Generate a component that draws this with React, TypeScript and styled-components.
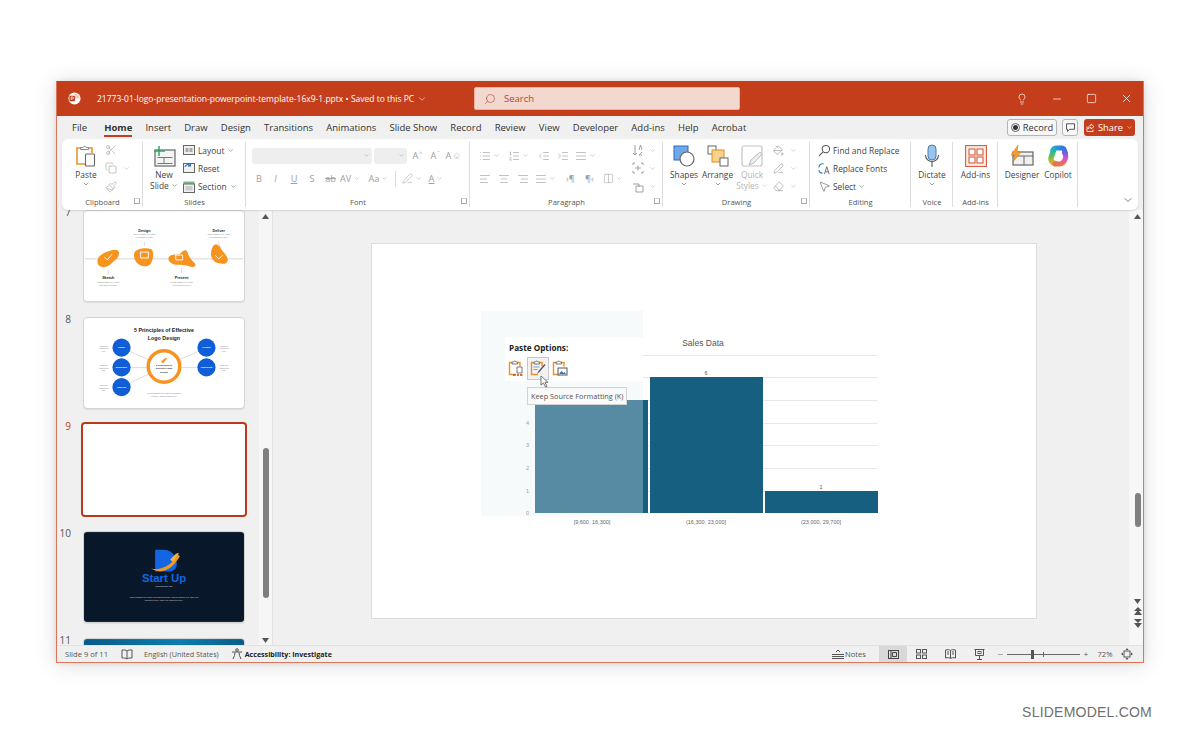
import React from 'react'
import styled, { createGlobalStyle } from 'styled-components'
import {
  AlignCenter, AlignJustify, AlignLeft, AlignRight, ChevronDown, Columns2, Copy, Eraser, IndentDecrease,
  IndentIncrease, Lightbulb, List, ListOrdered, Minus, MousePointer2, Paintbrush, PaintBucket, PenLine,
  Scissors, Search, Square, X
} from 'lucide-react'

const UI_FONT = `"Open Sans", "Noto Sans", sans-serif`

const GlobalStyle = createGlobalStyle`
  html, body { margin: 0; padding: 0; background: #fff; }
  body { font-family: ${UI_FONT}; color: #333; }
  * { box-sizing: border-box; }
`

const Page = styled.div`
  width: 1200px;
  height: 743px;
  padding: 81px 0 0 56px;
  overflow: hidden;
`

const Window = styled.div`
  width: 1088px;
  height: 582px;
  display: flex;
  flex-direction: column;
  background: #f0f0f0;
  border: 1px solid #d9775c;
  border-top: none;
  box-shadow: 0 0 6px rgba(0, 0, 0, 0.1), 0 2px 22px rgba(0, 0, 0, 0.13);
`

const TitleBar = styled.div`
  height: 35px;
  flex: none;
  display: flex;
  align-items: center;
  background: #c43e1c;
  color: #fff;
`

const TitleLeft = styled.div`
  width: 417px;
  display: flex;
  align-items: center;
  gap: 16px;
  padding-left: 11px;
  font-size: 8.5px;
  white-space: nowrap;
`

const TitleCaret = styled(ChevronDown)`
  margin-left: -13px;
`

const SearchBox = styled.div`
  width: 266px;
  height: 23px;
  display: flex;
  align-items: center;
  gap: 8px;
  padding-left: 9px;
  background: #f3d8d0;
  border: 1px solid #e8b3a3;
  border-radius: 2px;
  color: #b5472a;
  font-size: 9.5px;
`

const SearchGlyph = styled(Search)`
  transform: scaleX(-1);
`

const WindowControls = styled.div`
  flex: 1;
  display: flex;
  align-items: center;
  justify-content: flex-end;
  gap: 23px;
  padding-right: 10px;
`

const TabRow = styled.div`
  height: 23px;
  flex: none;
  display: flex;
  align-items: center;
  justify-content: space-between;
  padding: 0 8px 0 15px;
`

const Tabs = styled.div`
  display: flex;
  gap: 13.15px;
  font-size: 9.5px;
  color: #333;
`

const Tab = styled.div<{ $active?: boolean; $ml?: number }>`
  position: relative;
  height: 18px;
  line-height: 18px;
  margin-left: ${p => p.$ml ?? 0}px;
  white-space: nowrap;
  font-weight: ${p => (p.$active ? 700 : 400)};
  border-bottom: ${p => (p.$active ? '2px solid #c43e1c' : 'none')};
`

const TabActions = styled.div`
  display: flex;
  align-items: center;
  gap: 5px;
`

const OutlineButton = styled.div<{ $w: number }>`
  width: ${p => p.$w}px;
  height: 17px;
  display: flex;
  align-items: center;
  justify-content: center;
  gap: 3px;
  background: #f8f8f8;
  border: 1px solid #b5b5b5;
  border-radius: 3px;
  font-size: 9.3px;
  color: #333;
`

const ShareButton = styled.div`
  width: 51px;
  height: 17px;
  margin-left: 1px;
  display: flex;
  align-items: center;
  justify-content: center;
  gap: 3px;
  background: #c43e1c;
  border-radius: 3px;
  color: #fff;
  font-size: 9.3px;
`

const Ribbon = styled.div`
  height: 71px;
  flex: none;
  margin: 0 5px;
  display: flex;
  background: #fff;
  border-radius: 6px;
  box-shadow: 0 1px 2px rgba(0, 0, 0, 0.12);
  position: relative;
  z-index: 2;
`

const Group = styled.div<{ $w: number; $last?: boolean }>`
  width: ${p => p.$w}px;
  flex: none;
  display: flex;
  flex-direction: column;
  padding: 3px 0 3px;
  position: relative;
  &::after {
    content: '';
    position: absolute;
    right: 0;
    top: 3px;
    bottom: 3px;
    width: 1px;
    background: ${p => (p.$last ? 'transparent' : '#dedede')};
  }
`

const GroupBody = styled.div<{ $pad?: number; $disabled?: boolean }>`
  height: 54px;
  flex: none;
  display: flex;
  padding-left: ${p => p.$pad ?? 0}px;
  color: ${p => (p.$disabled ? '#a0a0a0' : '#555')};
`

const GroupFooter = styled.div`
  flex: 1;
  display: flex;
  align-items: center;
  justify-content: center;
  padding-top: 1px;
  font-size: 7.6px;
  color: #555;
  position: relative;
`

const Launcher = styled.div`
  position: absolute;
  right: 3px;
  top: 2px;
  width: 6px;
  height: 6px;
  border-left: 1px solid #a8a8a8;
  border-top: 1px solid #d0d0d0;
  border-bottom: 1px solid #a8a8a8;
  border-right: 1px solid #a8a8a8;
`

const LargeButton = styled.div<{ $w: number; $ml?: number; $disabled?: boolean }>`
  width: ${p => p.$w}px;
  margin-left: ${p => p.$ml ?? 0}px;
  flex: none;
  display: flex;
  flex-direction: column;
  align-items: center;
  font-size: 8.4px;
  line-height: 11px;
  white-space: nowrap;
  color: ${p => (p.$disabled ? '#b5b5b5' : '#444')};
`

const LargeIcon = styled.div`
  height: 27px;
  display: flex;
  align-items: center;
  justify-content: center;
`

const SmallCol = styled.div<{ $ml?: number }>`
  display: flex;
  flex-direction: column;
  margin: -1px 0 0 ${p => p.$ml ?? 0}px;
`

const SmallRow = styled.div<{ $disabled?: boolean; $gap?: number }>`
  height: 18.8px;
  display: flex;
  align-items: center;
  gap: ${p => p.$gap ?? 3}px;
  font-size: 8.4px;
  white-space: nowrap;
  color: ${p => (p.$disabled ? '#a0a0a0' : '#444')};
`

const ToolRows = styled.div`
  display: flex;
  flex-direction: column;
  gap: 6px;
  padding-top: 5px;
`

const ToolRow = styled.div`
  height: 17px;
  display: flex;
  align-items: center;
`

const Tool = styled.div<{ $w: number; $left?: boolean }>`
  width: ${p => p.$w}px;
  flex: none;
  display: flex;
  align-items: center;
  justify-content: ${p => (p.$left ? 'flex-start' : 'center')};
  gap: 2px;
  font-size: 9.2px;
  color: #a0a0a0;
`

const Mark = styled.span`
  font-size: 5.5px;
  margin: -5px 0 0 -1px;
`

const Combo = styled.div<{ $w: number }>`
  width: ${p => p.$w}px;
  height: 16px;
  flex: none;
  display: flex;
  align-items: center;
  justify-content: flex-end;
  padding-right: 2px;
  margin-right: 2px;
  background: #eeeeee;
  border-radius: 3px;
`

const RowDivider = styled.div`
  width: 1px;
  height: 16px;
  flex: none;
  background: #dedede;
  margin: 0 4px;
`

const CollapseSlot = styled.div`
  flex: 1;
  display: flex;
  align-items: flex-end;
  justify-content: flex-end;
  padding: 0 4px 4px 0;
  color: #444;
`

const Workspace = styled.div`
  flex: 1;
  min-height: 0;
  display: flex;
`

const ThumbPanel = styled.div`
  width: 202px;
  flex: none;
  overflow: hidden;
  display: flex;
  flex-direction: column;
  gap: 15px;
`

const ThumbRow = styled.div`
  display: flex;
  flex: none;
`

const ThumbNumber = styled.div<{ $active?: boolean }>`
  width: 26px;
  height: 12px;
  flex: none;
  margin-top: -4px;
  padding-right: 12px;
  text-align: right;
  font-size: 10px;
  line-height: 12px;
  color: ${p => (p.$active ? '#c43e1c' : '#555')};
`

const Thumb = styled.div<{ $active?: boolean }>`
  width: ${p => (p.$active ? 166 : 162)}px;
  height: ${p => (p.$active ? 95 : 92)}px;
  margin: ${p => (p.$active ? '-2px -2px -1px -2px' : '0')};
  background: #fff;
  border: ${p => (p.$active ? '2px solid #b93a1a' : '1px solid #d4d4d4')};
  border-radius: 4px;
  overflow: hidden;
  box-shadow: ${p => (p.$active ? 'none' : '0 1px 1px rgba(0,0,0,.08)')};
  svg { display: block; }
`

const PanelScroll = styled.div`
  width: 14px;
  flex: none;
  display: flex;
  flex-direction: column;
  align-items: center;
  background: #f6f6f6;
  border-right: 1px solid #e2e2e2;
  padding-top: 4px;
`

const PanelThumb = styled.div`
  width: 6px;
  height: 150px;
  margin-top: 229px;
  background: #7f7f7f;
  border-radius: 3px;
`

const ScrollArrow = styled.svg<{ $mt?: number }>`
  display: block;
  flex: none;
  margin-top: ${p => p.$mt ?? 0}px;
  fill: #555;
`

const Canvas = styled.div`
  flex: 1;
  padding: 34px 0 0 99px;
`

const Slide = styled.div`
  width: 664px;
  height: 374px;
  position: relative;
  background: #fff;
  box-shadow: 0 0 0 1px #dcdcdc;
  svg { display: block; }
`

const PasteVeil = styled.div`
  position: absolute;
  left: 109px;
  top: 67px;
  width: 162px;
  height: 205px;
  background: rgba(228, 238, 242, 0.31);
`

const PastePanel = styled.div`
  position: absolute;
  left: 133px;
  top: 93px;
  width: 138px;
  height: 44px;
  padding: 5px 0 0 4px;
  background: #fff;
`

const PasteTitle = styled.div`
  font-size: 8.2px;
  font-weight: 700;
  color: #222;
  line-height: 12px;
`

const PasteIcons = styled.div`
  display: flex;
  align-items: center;
  margin: 3px 0 0 -4px;
`

const PasteChoice = styled.div<{ $active?: boolean }>`
  width: 22px;
  height: 23px;
  display: flex;
  align-items: center;
  justify-content: center;
  background: ${p => (p.$active ? '#f2f2f2' : 'transparent')};
  border: 1px solid ${p => (p.$active ? '#c8c8c8' : 'transparent')};
`

const PasteTip = styled.div`
  position: absolute;
  left: 155px;
  top: 143px;
  width: 100px;
  height: 18px;
  padding-left: 3px;
  display: flex;
  align-items: center;
  background: #fafafa;
  border: 1px solid #d2d2d2;
  font-size: 7.3px;
  color: #555;
  white-space: nowrap;
`

const Pointer = styled.div`
  position: absolute;
  left: 168px;
  top: 131px;
  width: 10px;
  height: 13px;
  color: #555;
`

const CanvasScroll = styled.div`
  width: 14px;
  flex: none;
  display: flex;
  flex-direction: column;
  align-items: center;
  padding: 4px 0 0 3px;
  background: #f7f7f7;
`

const CanvasThumb = styled.div`
  width: 6px;
  height: 34px;
  margin-top: 274px;
  background: #7f7f7f;
  border-radius: 3px;
`

const StatusBar = styled.div`
  height: 17px;
  flex: none;
  display: flex;
  align-items: center;
  background: #f0f0f0;
  border-top: 1px solid #e2e2e2;
  padding-left: 8px;
  font-size: 7.6px;
  color: #555;
  white-space: nowrap;
`

const StatusLeft = styled.div`
  width: 767px;
  flex: none;
  display: flex;
  align-items: center;
`

const StatusGlyph = styled.svg<{ $ml: number; $mr: number }>`
  margin: 0 ${p => p.$mr}px 0 ${p => p.$ml}px;
`

const StatusLang = styled.span`
  font-size: 7.2px;
`

const StatusStrong = styled.span`
  font-size: 7.1px;
  font-weight: 700;
  color: #222;
  margin-left: 2px;
`

const StatusItem = styled.div<{ $w: number; $active?: boolean; $gap?: number }>`
  width: ${p => p.$w}px;
  height: 16px;
  flex: none;
  display: flex;
  align-items: center;
  justify-content: center;
  gap: ${p => p.$gap ?? 0}px;
  background: ${p => (p.$active ? '#d9d9d9' : 'transparent')};
`

const ZoomTrack = styled.div`
  width: 73px;
  height: 1px;
  flex: none;
  background: #666;
  position: relative;
`

const ZoomHandle = styled.div`
  position: absolute;
  left: 24px;
  top: -4px;
  width: 3px;
  height: 9px;
  background: #555;
`

const ZoomTick = styled.div`
  position: absolute;
  left: 36px;
  top: -2px;
  width: 1px;
  height: 5px;
  background: #666;
`

const Watermark = styled.div`
  margin: 41px 48px 0 0;
  text-align: right;
  font-family: "Liberation Sans", Arial, sans-serif;
  font-size: 14px;
  letter-spacing: 0.22px;
  color: #707070;
`

const Caret = ({ size = 8, color = 'currentColor' }: { size?: number; color?: string }) => (
  <ChevronDown size={size} color={color} strokeWidth={1.6} />
)

const PowerPointLogo = () => (
  <svg width="13" height="13" viewBox="0 0 14 14">
    <circle cx="7" cy="7" r="6.5" fill="#fff" />
    <path d="M7 1.5v5.5h5.5A5.5 5.5 0 0 0 7 1.5z" fill="#f3c9bb" />
    <rect x="1.5" y="4" width="6" height="6" rx="1" fill="#c43e1c" />
    <path d="M3.5 8.6V5.4h1.4a1 1 0 0 1 0 2H3.5" fill="none" stroke="#fff" strokeWidth=".8" />
  </svg>
)

const PasteIcon = () => (
  <svg width="22" height="24" viewBox="0 0 22 24" fill="none">
    <path d="M6 4H2v16h8" stroke="#e8912d" strokeWidth="1.6" />
    <path d="M13 4h4v5" stroke="#e8912d" strokeWidth="1.6" />
    <path d="M5.500 5.500V3.500h2.400a1.700 1.700 0 0 1 3.200 0h2.400v2z" fill="#fff" stroke="#888" />
    <rect x="10.500" y="10" width="9" height="12" rx="1" fill="#fff" stroke="#666" strokeWidth="1.1" />
  </svg>
)

const NewSlideIcon = () => (
  <svg width="24" height="22" viewBox="0 0 24 22" fill="none">
    <rect x="3" y="5" width="20" height="16" fill="#f4f4f4" stroke="#666" strokeWidth="1.2" />
    <path d="M5.500 12.500h15M12 12.500v6M5.500 18.500h15" stroke="#777" />
    <path d="M7 1v10M2 6h11" stroke="#38a169" strokeWidth="1.5" />
  </svg>
)

const LayoutIcon = ({ kind }: { kind: 'layout' | 'reset' | 'section' }) => (
  <svg width="12" height="12" viewBox="0 0 12 12" fill="none">
    {kind === 'section' && <rect x=".5" y=".5" width="11" height="2.400" fill="#7cb98c" />}
    <rect x=".5" y={kind === 'section' ? 3 : 1.5} width="11" height={kind === 'section' ? 8.5 : 9} fill="#f0f0f0" stroke="#666" />
    {kind === 'layout' && <path d="M2.500 4h3v4h-3zM6.500 4h3v4h-3z" fill="#aaa" />}
    {kind === 'reset' && <path d="M2 5a3 3 0 0 1 5-1.500M7.500 1.500v2.500H5" stroke="#2d6fb8" strokeWidth="1.1" />}
    {kind === 'section' && <rect x="2.500" y="5" width="7" height="4.500" fill="#ccc" />}
  </svg>
)

const ShapesIcon = () => (
  <svg width="22" height="22" viewBox="0 0 22 22">
    <rect x="1" y="1" width="14" height="14" fill="#6fa6e6" stroke="#2d6fb8" />
    <circle cx="14" cy="14" r="7" fill="#fff" stroke="#666" strokeWidth="1.2" />
  </svg>
)

const ArrangeIcon = () => (
  <svg width="22" height="22" viewBox="0 0 22 22">
    <rect x="1" y="1" width="8" height="8" fill="#fff" stroke="#666" />
    <rect x="5" y="5" width="12" height="12" fill="#f7d48d" stroke="#e08a1e" />
    <rect x="13" y="13" width="8" height="8" fill="#fff" stroke="#666" />
  </svg>
)

const QuickStylesIcon = () => (
  <svg width="22" height="22" viewBox="0 0 22 22" fill="none">
    <rect x="1" y="1" width="20" height="20" rx="2" stroke="#c4c4c4" strokeWidth="1.2" />
    <path d="M8 20l2-5 9-8 2 2-8 9z" fill="#eee" stroke="#bbb" />
  </svg>
)

const MicIcon = () => (
  <svg width="16" height="24" viewBox="0 0 16 24" fill="none">
    <rect x="4" y="1" width="8" height="15" rx="4" fill="#9cc3ea" stroke="#3f7fc0" />
    <path d="M1.500 11a6.500 6.500 0 0 0 13 0M8 18v5" stroke="#555" strokeWidth="1.1" />
  </svg>
)

const AddinsIcon = () => (
  <svg width="22" height="22" viewBox="0 0 22 22" fill="none" stroke="#d8593a" strokeWidth="1.1">
    <rect x=".6" y=".6" width="20.800" height="20.800" fill="#fdf0ec" />
    <rect x="4" y="4" width="6" height="6" fill="#fff" />
    <rect x="12" y="4" width="6" height="6" fill="#fff" />
    <rect x="4" y="12" width="6" height="6" fill="#fff" />
    <rect x="12" y="12" width="6" height="6" fill="#fff" />
  </svg>
)

const DesignerIcon = () => (
  <svg width="24" height="22" viewBox="0 0 24 22" fill="none">
    <rect x="3" y="7" width="20" height="13" fill="#f0f0f0" stroke="#666" strokeWidth="1.2" />
    <path d="M3 11h20M14 11v9" stroke="#666" />
    <path d="M8 0L1 10h4l-2 7 8-10H7z" fill="#f0a030" stroke="#d9771c" strokeWidth=".5" />
  </svg>
)

const CopilotIcon = () => (
  <svg width="22" height="22" viewBox="0 0 22 22" fill="none" strokeLinecap="round" strokeLinejoin="round">
    <defs>
      <linearGradient id="copTop" x1="0" y1="0" x2="1" y2="0">
        <stop offset="0" stopColor="#23a6d5" />
        <stop offset="1" stopColor="#3a6fe0" />
      </linearGradient>
      <linearGradient id="copLeft" x1="0" y1="0" x2="0" y2="1">
        <stop offset="0" stopColor="#1fb5a8" />
        <stop offset=".55" stopColor="#7ac143" />
        <stop offset="1" stopColor="#f5a623" />
      </linearGradient>
      <linearGradient id="copRight" x1="0" y1="0" x2="0" y2="1">
        <stop offset="0" stopColor="#7a5be0" />
        <stop offset=".55" stopColor="#d955c8" />
        <stop offset="1" stopColor="#f0743e" />
      </linearGradient>
    </defs>
    <path d="M6 5c1-1.500 2-2 3.500-2h5c1.500 0 2.500 1 3 2.500l1 3" stroke="url(#copTop)" strokeWidth="5" />
    <path d="M6.500 5.500L4 13c-.5 2.500 1 5 4 5.500" stroke="url(#copLeft)" strokeWidth="5.500" />
    <path d="M17.500 8c1.500 2 1.500 5 0 7.500-1 2-3 3.500-5 3.500H8" stroke="url(#copRight)" strokeWidth="5" />
    <path d="M13 8.500l-3 6" stroke="#fff" strokeWidth="3" />
  </svg>
)

const FindIcon = () => (
  <svg width="13" height="13" viewBox="0 0 14 14" fill="none" stroke="#555" strokeWidth="1.1">
    <circle cx="8.500" cy="5.500" r="4" />
    <path d="M5.500 8.500L1 13" />
  </svg>
)

const ReplaceFontsIcon = () => (
  <svg width="13" height="13" viewBox="0 0 14 14" fill="none">
    <path d="M1 6a4 4 0 0 1 5-4M5 12a4 4 0 0 1-4-3" stroke="#2d7fc8" strokeWidth="1.2" />
    <path d="M7 13l2.500-8 2.500 8M8 10.500h3" stroke="#666" />
  </svg>
)

const DirectionIcon = ({ kind }: { kind: 'sort' | 'align' | 'smart' }) => (
  <svg width="12" height="12" viewBox="0 0 12 12" fill="none" stroke="#a0a0a0">
    {kind === 'sort' && <path d="M3 1v10M1 9l2 2 2-2M7 6l1.500-5L10 6M7 11h3M10 8l-3 3" />}
    {kind === 'align' && <path d="M1 3V1h2M9 1h2v2M1 9v2h2M9 11h2V9M3 6h6M6 3.500v5" />}
    {kind === 'smart' && <path d="M1 3h6v3M4 5h7v6H4z" />}
  </svg>
)

const PasteSmall = ({ badge }: { badge: 'text' | 'brush' | 'image' }) => (
  <svg width="16" height="17" viewBox="0 0 16 17" fill="none">
    <path d="M4 2.500H1.500v12H8M9.500 2.500H12v4" stroke="#e8912d" strokeWidth="1.400" />
    <path d="M4 4V2h1.500a1.300 1.300 0 0 1 2.500 0H9.500v2z" fill="#fff" stroke="#777" />
    {badge === 'text' && <path d="M9 7h5v6H9z" fill="#fff" stroke="#777" />}
    {badge === 'text' && <path d="M5 15h2.500M9 15h2M12 15h2.500" stroke="#c43e1c" strokeWidth="1.500" />}
    {badge === 'brush' && <path d="M3.500 7h6M3.500 9.500h4" stroke="#6fa6e6" />}
    {badge === 'brush' && <path d="M7 14l1.500-3 6-7 1 1-6 7z" fill="#555" />}
    {badge === 'image' && <rect x="6" y="8" width="9" height="7" fill="#fff" stroke="#555" />}
    {badge === 'image' && <path d="M7 14l2.500-3 2 2 1-1 1.500 2z" fill="#2d6fb8" />}
  </svg>
)

const Blob = ({ d }: { d: string }) => <path d={d} fill="#f7931e" />

const Slide7 = () => (
  <svg width="160" height="90" viewBox="0 0 162 92" fontFamily="Liberation Sans, sans-serif">
    <rect x="0" y="48" width="162" height="1.500" fill="#e4e4e4" />
    <Blob d="M13 52c0-6 5-8 9-10 6-3 13-4 13 1 0 5-4 7-7 10-5 6-15 6-15-1z" />
    <Blob d="M51 42c3-4 12-5 17-3 3 2 2 10 0 14-3 5-8 4-12 2-4-2-7-8-5-13z" />
    <Blob d="M86 47c2-3 8-2 11-3 3-3 6-6 8-2 1 4 3 7 7 11 3 3 0 5-4 4-5-2-10-2-15-2-5-1-9-5-7-8z" />
    <Blob d="M131 36c2-3 7-2 8 2 2 4 8 8 7 13-1 4-7 3-11 2-3-1-6-5-6-9 0-3 1-6 2-8z" />
    <text x="61" y="21" fontSize="3.800" fontWeight="700" textAnchor="middle" fill="#222">Design</text>
    <text x="137" y="21" fontSize="3.800" fontWeight="700" textAnchor="middle" fill="#222">Deliver</text>
    <text x="24" y="70" fontSize="3.800" fontWeight="700" textAnchor="middle" fill="#222">Sketch</text>
    <text x="99" y="70" fontSize="3.800" fontWeight="700" textAnchor="middle" fill="#222">Present</text>
    <g fontSize="1.900" textAnchor="middle" fill="#777">
      <text x="61" y="25">This is a sample text. Insert</text>
      <text x="61" y="28">your desired text here.</text>
      <text x="137" y="25">This is a sample text. Insert</text>
      <text x="137" y="28">your desired text here.</text>
      <text x="24" y="74">This is a sample text. Insert</text>
      <text x="24" y="77">your desired text here.</text>
      <text x="99" y="74">This is a sample text. Insert</text>
      <text x="99" y="77">your desired text here.</text>
    </g>
    <path d="M61 31v5M137 31v5M24 60v5M99 59v5" stroke="#ddd" />
    <path d="M20 47l3 3 5-6M57 42h8v6h-8zM93 45h7v5h-7zM133 45l4 4 4-4" stroke="#fff" fill="none" strokeWidth="1" />
  </svg>
)

const Slide8 = () => (
  <svg width="160" height="90" viewBox="0 0 162 91" fontFamily="Liberation Sans, sans-serif">
    <text x="81" y="14" fontSize="5.400" fontWeight="700" textAnchor="middle" fill="#222">5 Principles of Effective</text>
    <text x="81" y="22" fontSize="5.400" fontWeight="700" textAnchor="middle" fill="#222">Logo Design</text>
    <path d="M38 30l43 19M38 50h43M38 70l43-21M124 30l-43 19M124 50H81" stroke="#ddd" />
    {[[38, 30, 'Simple'], [38, 50, 'Memorable'], [38, 70, 'Timeless'], [124, 30, 'Versatile'], [124, 50, 'Appropriate']].map(([x, y, t]) => (
      <g key={String(t)}>
        <circle cx={Number(x)} cy={Number(y)} r="9.200" fill="#0f5ed7" />
        <text x={Number(x)} y={Number(y) + 0.8} fontSize="2.200" fontWeight="700" textAnchor="middle" fill="#fff">{t}</text>
        <text x={Number(x) < 81 ? Number(x) - 18 : Number(x) + 18} y={Number(y) - 1} fontSize="1.800" textAnchor="middle" fill="#777">Insert your</text>
        <text x={Number(x) < 81 ? Number(x) - 18 : Number(x) + 18} y={Number(y) + 1.500} fontSize="1.800" textAnchor="middle" fill="#777">desired text</text>
        <text x={Number(x) < 81 ? Number(x) - 18 : Number(x) + 18} y={Number(y) + 4} fontSize="1.800" textAnchor="middle" fill="#777">here.</text>
      </g>
    ))}
    <circle cx="81" cy="49" r="16" fill="#fff" stroke="#f7931e" strokeWidth="3.500" />
    <path d="M78 44l5-4 1 1-4 5z" fill="#f7931e" />
    <text x="81" y="49" fontSize="2.400" fontWeight="700" textAnchor="middle" fill="#222">5 Principles of</text>
    <text x="81" y="52" fontSize="2.400" fontWeight="700" textAnchor="middle" fill="#222">Effective Logo</text>
    <text x="81" y="55.500" fontSize="2.400" fontWeight="700" textAnchor="middle" fill="#222">Design</text>
    <text x="81" y="77" fontSize="1.900" textAnchor="middle" fill="#777">This is a sample text. Insert your desired</text>
    <text x="81" y="80" fontSize="1.900" textAnchor="middle" fill="#777">text here. This is a sample text.</text>
  </svg>
)

const Slide10 = () => (
  <svg width="160" height="90" viewBox="0 0 162 91" fontFamily="Liberation Sans, sans-serif">
    <defs>
      <pattern id="dots" width="2" height="2" patternUnits="userSpaceOnUse">
        <rect width="2" height="2" fill="#071527" />
        <circle cx="1" cy="1" r=".35" fill="#1d3a55" />
      </pattern>
    </defs>
    <rect width="162" height="91" fill="url(#dots)" />
    <path d="M72 18h9c9 0 13 9 13 14 0 4-3 8-8 8H72z" fill="#1366e0" />
    <path d="M68 37c8 2 18-2 24-10l4-4 1 2-3 4c-6 9-16 14-26 8z" fill="#f29a1f" />
    <path d="M87 28l6-6 3-1-1 3-5 6z" fill="#f7b13a" />
    <text x="81" y="51" fontSize="11.500" fontWeight="700" textAnchor="middle" fill="#1268e2">Start Up</text>
    <text x="81" y="56" fontSize="2" textAnchor="middle" fill="#ddd">businessname.com</text>
    <text x="81" y="67" fontSize="1.900" textAnchor="middle" fill="#ddd">This is a sample text. Insert your desired text here. This is a sample text. Insert your</text>
    <text x="81" y="70" fontSize="1.900" textAnchor="middle" fill="#ddd">desired text here. Insert your desired text here.</text>
  </svg>
)

const Slide11 = () => (
  <svg width="160" height="90" viewBox="0 0 162 91">
    <defs>
      <linearGradient id="s11" x1="0" y1="0" x2="1" y2="0">
        <stop offset="0" stopColor="#0a5a86" />
        <stop offset=".6" stopColor="#0b7db0" />
        <stop offset="1" stopColor="#0a5a86" />
      </linearGradient>
    </defs>
    <rect width="162" height="91" fill="url(#s11)" />
  </svg>
)

const SalesChart = () => {
  const ox = 372
  const oy = 244
  const grid = [355, 377, 400, 423, 445, 468, 491]
  const ticks: [string, number][] = [['0', 513], ['1', 491], ['2', 468], ['3', 445], ['4', 423]]
  return (
    <svg width="664" height="374" viewBox={`${ox} ${oy} 664 374`} fontFamily="Liberation Sans, sans-serif">
      <text x="703" y="346" fontSize="8.500" textAnchor="middle" fill="#555">Sales Data</text>
      {grid.map(y => <rect key={y} x="535" y={y} width="343" height="1" fill="#e8e8e8" />)}
      <rect x="535" y="400" width="113" height="113" fill="#175f80" />
      <rect x="650" y="377" width="113" height="136" fill="#175f80" />
      <rect x="765" y="491" width="113" height="22" fill="#175f80" />
      {ticks.map(([t, y]) => <text key={t} x="529" y={y + 2} fontSize="5.500" textAnchor="end" fill="#777">{t}</text>)}
      <text x="706" y="375" fontSize="5.500" textAnchor="middle" fill="#555">6</text>
      <text x="821" y="489" fontSize="5.500" textAnchor="middle" fill="#555">1</text>
      <text x="592" y="524" fontSize="5.500" textAnchor="middle" fill="#666">[9,600, 16,300]</text>
      <text x="706" y="524" fontSize="5.500" textAnchor="middle" fill="#666">(16,300, 23,000]</text>
      <text x="821" y="524" fontSize="5.500" textAnchor="middle" fill="#666">(23,000, 29,700]</text>
    </svg>
  )
}

const Triangle = ({ up, mt }: { up?: boolean; mt?: number }) => (
  <ScrollArrow $mt={mt} width="7" height="5" viewBox="0 0 7 5">
    <path d={up ? 'M3.500 0L7 5H0z' : 'M0 0h7L3.500 5z'} />
  </ScrollArrow>
)

const DoubleTriangle = ({ up, mt }: { up?: boolean; mt?: number }) => (
  <ScrollArrow $mt={mt} width="8" height="9" viewBox="0 0 8 9">
    <path d={up ? 'M4 0l4 4H0zM4 3l4 5H0z' : 'M0 0h8L4 4zM0 4h8L4 9z'} />
  </ScrollArrow>
)

const App: React.FC = () => {
  const gray = '#a0a0a0'
  return (
    <Page>
      <GlobalStyle />
      <Window>
        <TitleBar>
          <TitleLeft>
            <PowerPointLogo />
            <span>21773-01-logo-presentation-powerpoint-template-16x9-1.pptx • Saved to this PC</span>
            <TitleCaret size={10} strokeWidth={1.4} />
          </TitleLeft>
          <SearchBox>
            <SearchGlyph size={12} strokeWidth={1.3} />
            Search
          </SearchBox>
          <WindowControls>
            <Lightbulb size={12} strokeWidth={1.4} color="#fff" />
            <Minus size={12} strokeWidth={1.4} color="#fff" />
            <Square size={11} strokeWidth={1.5} color="#fff" />
            <X size={13} strokeWidth={1.4} color="#fff" />
          </WindowControls>
        </TitleBar>

        <TabRow>
          <Tabs>
            <Tab>File</Tab>
            <Tab $active $ml={4}>Home</Tab>
            <Tab>Insert</Tab>
            <Tab>Draw</Tab>
            <Tab>Design</Tab>
            <Tab>Transitions</Tab>
            <Tab>Animations</Tab>
            <Tab>Slide Show</Tab>
            <Tab>Record</Tab>
            <Tab>Review</Tab>
            <Tab>View</Tab>
            <Tab>Developer</Tab>
            <Tab>Add-ins</Tab>
            <Tab>Help</Tab>
            <Tab>Acrobat</Tab>
          </Tabs>
          <TabActions>
            <OutlineButton $w={50}>
              <svg width="9" height="9" viewBox="0 0 9 9"><circle cx="4.500" cy="4.500" r="4" fill="none" stroke="#444" strokeWidth=".8" /><circle cx="4.500" cy="4.500" r="2.500" fill="#333" /></svg>
              Record
            </OutlineButton>
            <OutlineButton $w={16}>
              <svg width="9" height="9" viewBox="0 0 9 9" fill="none" stroke="#444" strokeWidth=".9"><path d="M.5.800h8v5.500H3.500L1.500 8.500V6.300h-1z" /></svg>
            </OutlineButton>
            <ShareButton>
              <svg width="9" height="9" viewBox="0 0 9 9" fill="none" stroke="#fff" strokeWidth=".8"><path d="M1 3.500v5h6v-2M5 1l3 2.500L5 6V4.500C3.500 4.500 2.500 5 2 6c0-2 1-3.500 3-3.500z" /></svg>
              Share
              <Caret size={7} />
            </ShareButton>
          </TabActions>
        </TabRow>

        <Ribbon>
          <Group $w={81}>
            <GroupBody $pad={12}>
              <LargeButton $w={24}>
                <LargeIcon><PasteIcon /></LargeIcon>
                Paste
                <Caret />
              </LargeButton>
              <SmallCol $ml={7}>
                <SmallRow $disabled><Scissors size={12} strokeWidth={1.2} color={gray} /></SmallRow>
                <SmallRow $disabled $gap={6}><Copy size={12} strokeWidth={1.2} color={gray} /><Caret size={7} color={gray} /></SmallRow>
                <SmallRow $disabled><Paintbrush size={12} strokeWidth={1.2} color={gray} /></SmallRow>
              </SmallCol>
            </GroupBody>
            <GroupFooter>Clipboard<Launcher /></GroupFooter>
          </Group>

          <Group $w={103}>
            <GroupBody $pad={8}>
              <LargeButton $w={26}>
                <LargeIcon><NewSlideIcon /></LargeIcon>
                New
                <span>Slide <Caret size={7} /></span>
              </LargeButton>
              <SmallCol $ml={6}>
                <SmallRow><LayoutIcon kind="layout" />Layout <Caret size={7} /></SmallRow>
                <SmallRow><LayoutIcon kind="reset" />Reset</SmallRow>
                <SmallRow><LayoutIcon kind="section" />Section <Caret size={7} /></SmallRow>
              </SmallCol>
            </GroupBody>
            <GroupFooter>Slides</GroupFooter>
          </Group>

          <Group $w={224}>
            <GroupBody $pad={6} $disabled>
              <ToolRows>
                <ToolRow>
                  <Combo $w={120}><Caret size={7} color={gray} /></Combo>
                  <Combo $w={33}><Caret size={7} color={gray} /></Combo>
                  <Tool $w={17}>A<Mark>^</Mark></Tool>
                  <Tool $w={18}>A<Mark>ˇ</Mark></Tool>
                  <Tool $w={18}>A<Eraser size={7} color={gray} strokeWidth={1.2} /></Tool>
                </ToolRow>
                <ToolRow>
                  <Tool $w={14}>B</Tool>
                  <Tool $w={19}><i>I</i></Tool>
                  <Tool $w={18}><u>U</u></Tool>
                  <Tool $w={18}>S</Tool>
                  <Tool $w={19}><s>ab</s></Tool>
                  <Tool $w={26} $left>AV<Caret size={7} color={gray} /></Tool>
                  <Tool $w={25}>Aa<Caret size={7} color={gray} /></Tool>
                  <RowDivider />
                  <Tool $w={24}><PenLine size={11} color={gray} strokeWidth={1.2} /><Caret size={7} color={gray} /></Tool>
                  <Tool $w={24}><u>A</u><Caret size={7} color={gray} /></Tool>
                </ToolRow>
              </ToolRows>
            </GroupBody>
            <GroupFooter>Font<Launcher /></GroupFooter>
          </Group>

          <Group $w={193}>
            <GroupBody $pad={9} $disabled>
              <ToolRows>
                <ToolRow>
                  <Tool $w={29} $left><List size={12} color={gray} strokeWidth={1.3} /><Caret size={7} color={gray} /></Tool>
                  <Tool $w={30} $left><ListOrdered size={12} color={gray} strokeWidth={1.3} /><Caret size={7} color={gray} /></Tool>
                  <Tool $w={19} $left><IndentDecrease size={12} color={gray} strokeWidth={1.3} /></Tool>
                  <Tool $w={18} $left><IndentIncrease size={12} color={gray} strokeWidth={1.3} /></Tool>
                  <Tool $w={30} $left><AlignJustify size={12} color={gray} strokeWidth={1.3} /><Caret size={7} color={gray} /></Tool>
                </ToolRow>
                <ToolRow>
                  <Tool $w={19} $left><AlignLeft size={12} color={gray} strokeWidth={1.3} /></Tool>
                  <Tool $w={19} $left><AlignCenter size={12} color={gray} strokeWidth={1.3} /></Tool>
                  <Tool $w={18} $left><AlignRight size={12} color={gray} strokeWidth={1.3} /></Tool>
                  <Tool $w={31} $left><AlignJustify size={12} color={gray} strokeWidth={1.3} /><Caret size={7} color={gray} /></Tool>
                  <Tool $w={19} $left>›¶</Tool>
                  <Tool $w={18} $left>¶‹</Tool>
                  <Tool $w={26} $left><Columns2 size={11} color={gray} strokeWidth={1.2} /><Caret size={7} color={gray} /></Tool>
                </ToolRow>
              </ToolRows>
              <SmallCol $ml={3}>
                <SmallRow $disabled $gap={5}><DirectionIcon kind="sort" /><Caret size={7} color={gray} /></SmallRow>
                <SmallRow $disabled $gap={5}><DirectionIcon kind="align" /><Caret size={7} color={gray} /></SmallRow>
                <SmallRow $disabled $gap={5}><DirectionIcon kind="smart" /><Caret size={7} color={gray} /></SmallRow>
              </SmallCol>
            </GroupBody>
            <GroupFooter>Paragraph<Launcher /></GroupFooter>
          </Group>

          <Group $w={147}>
            <GroupBody $pad={7}>
              <LargeButton $w={28}>
                <LargeIcon><ShapesIcon /></LargeIcon>
                Shapes
                <Caret />
              </LargeButton>
              <LargeButton $w={31} $ml={4}>
                <LargeIcon><ArrangeIcon /></LargeIcon>
                Arrange
                <Caret />
              </LargeButton>
              <LargeButton $w={30} $ml={4} $disabled>
                <LargeIcon><QuickStylesIcon /></LargeIcon>
                Quick
                <span>Styles <Caret size={7} /></span>
              </LargeButton>
              <SmallCol $ml={6}>
                <SmallRow $gap={6}><PaintBucket size={11} color="#888" strokeWidth={1.2} /><Caret size={7} color={gray} /></SmallRow>
                <SmallRow $gap={6}><PenLine size={11} color="#888" strokeWidth={1.2} /><Caret size={7} color={gray} /></SmallRow>
                <SmallRow $gap={6}><Eraser size={11} color="#888" strokeWidth={1.2} /><Caret size={7} color={gray} /></SmallRow>
              </SmallCol>
            </GroupBody>
            <GroupFooter>Drawing<Launcher /></GroupFooter>
          </Group>

          <Group $w={101}>
            <GroupBody $pad={8}>
              <SmallCol>
                <SmallRow $gap={2}><FindIcon />Find and Replace</SmallRow>
                <SmallRow $gap={2}><ReplaceFontsIcon />Replace Fonts</SmallRow>
                <SmallRow $gap={2}><MousePointer2 size={13} strokeWidth={1.1} color="#555" />Select <Caret size={7} /></SmallRow>
              </SmallCol>
            </GroupBody>
            <GroupFooter>Editing</GroupFooter>
          </Group>

          <Group $w={42}>
            <GroupBody>
              <LargeButton $w={42}>
                <LargeIcon><MicIcon /></LargeIcon>
                Dictate
                <Caret />
              </LargeButton>
            </GroupBody>
            <GroupFooter>Voice</GroupFooter>
          </Group>

          <Group $w={45}>
            <GroupBody>
              <LargeButton $w={45}>
                <LargeIcon><AddinsIcon /></LargeIcon>
                Add-ins
              </LargeButton>
            </GroupBody>
            <GroupFooter>Add-ins</GroupFooter>
          </Group>

          <Group $w={80}>
            <GroupBody $pad={5}>
              <LargeButton $w={38}>
                <LargeIcon><DesignerIcon /></LargeIcon>
                Designer
              </LargeButton>
              <LargeButton $w={34}>
                <LargeIcon><CopilotIcon /></LargeIcon>
                Copilot
              </LargeButton>
            </GroupBody>
          </Group>

          <CollapseSlot><ChevronDown size={12} strokeWidth={1.4} /></CollapseSlot>
        </Ribbon>

        <Workspace>
          <ThumbPanel>
            <ThumbRow><ThumbNumber>7</ThumbNumber><Thumb><Slide7 /></Thumb></ThumbRow>
            <ThumbRow><ThumbNumber>8</ThumbNumber><Thumb><Slide8 /></Thumb></ThumbRow>
            <ThumbRow><ThumbNumber $active>9</ThumbNumber><Thumb $active /></ThumbRow>
            <ThumbRow><ThumbNumber>10</ThumbNumber><Thumb><Slide10 /></Thumb></ThumbRow>
            <ThumbRow><ThumbNumber>11</ThumbNumber><Thumb><Slide11 /></Thumb></ThumbRow>
          </ThumbPanel>
          <PanelScroll>
            <Triangle up />
            <PanelThumb />
            <Triangle mt={40} />
          </PanelScroll>
          <Canvas>
            <Slide>
              <SalesChart />
              <PasteVeil />
              <PastePanel>
                <PasteTitle>Paste Options:</PasteTitle>
                <PasteIcons>
                  <PasteChoice><PasteSmall badge="text" /></PasteChoice>
                  <PasteChoice $active><PasteSmall badge="brush" /></PasteChoice>
                  <PasteChoice><PasteSmall badge="image" /></PasteChoice>
                </PasteIcons>
              </PastePanel>
              <PasteTip>Keep Source Formatting (K)</PasteTip>
              <Pointer>
                <svg width="10" height="13" viewBox="0 0 10 13"><path d="M1 1v9l2.500-2 2 4 1.500-.7-2-4h3z" fill="#fff" stroke="#555" strokeWidth=".8" /></svg>
              </Pointer>
            </Slide>
          </Canvas>
          <CanvasScroll>
            <Triangle up />
            <CanvasThumb />
            <Triangle mt={72} />
            <DoubleTriangle up mt={3} />
            <DoubleTriangle mt={3} />
          </CanvasScroll>
        </Workspace>

        <StatusBar>
          <StatusLeft>
            <span>Slide 9 of 11</span>
            <StatusGlyph $ml={13} $mr={11} width="12" height="11" viewBox="0 0 12 11" fill="none" stroke="#555"><path d="M6 2C5 1 3 .8 1 1v8c2-.2 4 0 5 1 1-1 2.500-1.200 5-1V1C9 .8 7 1 6 2zM6 2v8" /></StatusGlyph>
            <StatusLang>English (United States)</StatusLang>
            <StatusGlyph $ml={12} $mr={0} width="12" height="12" viewBox="0 0 12 12" fill="none" stroke="#555"><circle cx="6" cy="2" r="1.300" /><path d="M1 4h10M4 4.500l-.5 3L2 11M8 4.500l.5 3 1.500 3.500" /></StatusGlyph>
            <StatusStrong>Accessibility: Investigate</StatusStrong>
          </StatusLeft>
          <StatusItem $w={34} $gap={1}>
            <svg width="12" height="10" viewBox="0 0 12 10" fill="none" stroke="#555"><path d="M4 3l2-2 2 2M0 5.500h12M0 7.500h12M0 9.500h12" /></svg>
            Notes
          </StatusItem>
          <StatusItem $w={13} />
          <StatusItem $w={28} $active>
            <svg width="11" height="9" viewBox="0 0 11 9" fill="none" stroke="#444"><rect x=".5" y=".5" width="10" height="8" /><path d="M3 .5v8M4.500 2.500h4v4h-4z" /></svg>
          </StatusItem>
          <StatusItem $w={29}>
            <svg width="11" height="10" viewBox="0 0 11 10" fill="none" stroke="#555"><rect x=".5" y=".5" width="4" height="3.500" /><rect x="6.500" y=".5" width="4" height="3.500" /><rect x=".5" y="6" width="4" height="3.500" /><rect x="6.500" y="6" width="4" height="3.500" /></svg>
          </StatusItem>
          <StatusItem $w={29}>
            <svg width="11" height="10" viewBox="0 0 11 10" fill="none" stroke="#555"><path d="M5.500 1.500C4.500.5 2.500.5.500 1v8c2-.5 4-.5 5 .5 1-1 3-1 5-.5V1c-2-.5-4-.5-5 .5zM5.500 1.500v8M2 3h2M2 5h2M7 3h2M7 5h2" /></svg>
          </StatusItem>
          <StatusItem $w={28}>
            <svg width="11" height="11" viewBox="0 0 11 11" fill="none" stroke="#555"><path d="M.5.500h10M1.500.500v6h8v-6M5.500 6.500V10M3 10.500h5" /><rect x="4" y="2.500" width="3" height="2" /></svg>
          </StatusItem>
          <StatusItem $w={14}><Minus size={7} strokeWidth={1.6} /></StatusItem>
          <ZoomTrack><ZoomHandle /><ZoomTick /></ZoomTrack>
          <StatusItem $w={12}>+</StatusItem>
          <StatusItem $w={26}>72%</StatusItem>
          <StatusItem $w={18}>
            <svg width="12" height="12" viewBox="0 0 12 12" fill="none" stroke="#555"><rect x="3" y="3" width="6" height="6" /><path d="M6 0l1.500 2h-3zM6 12l1.500-2h-3zM0 6l2-1.500v3zM12 6l-2-1.500v3z" fill="#555" stroke="none" /></svg>
          </StatusItem>
        </StatusBar>
      </Window>
      <Watermark>SLIDEMODEL.COM</Watermark>
    </Page>
  )
}

export default App
